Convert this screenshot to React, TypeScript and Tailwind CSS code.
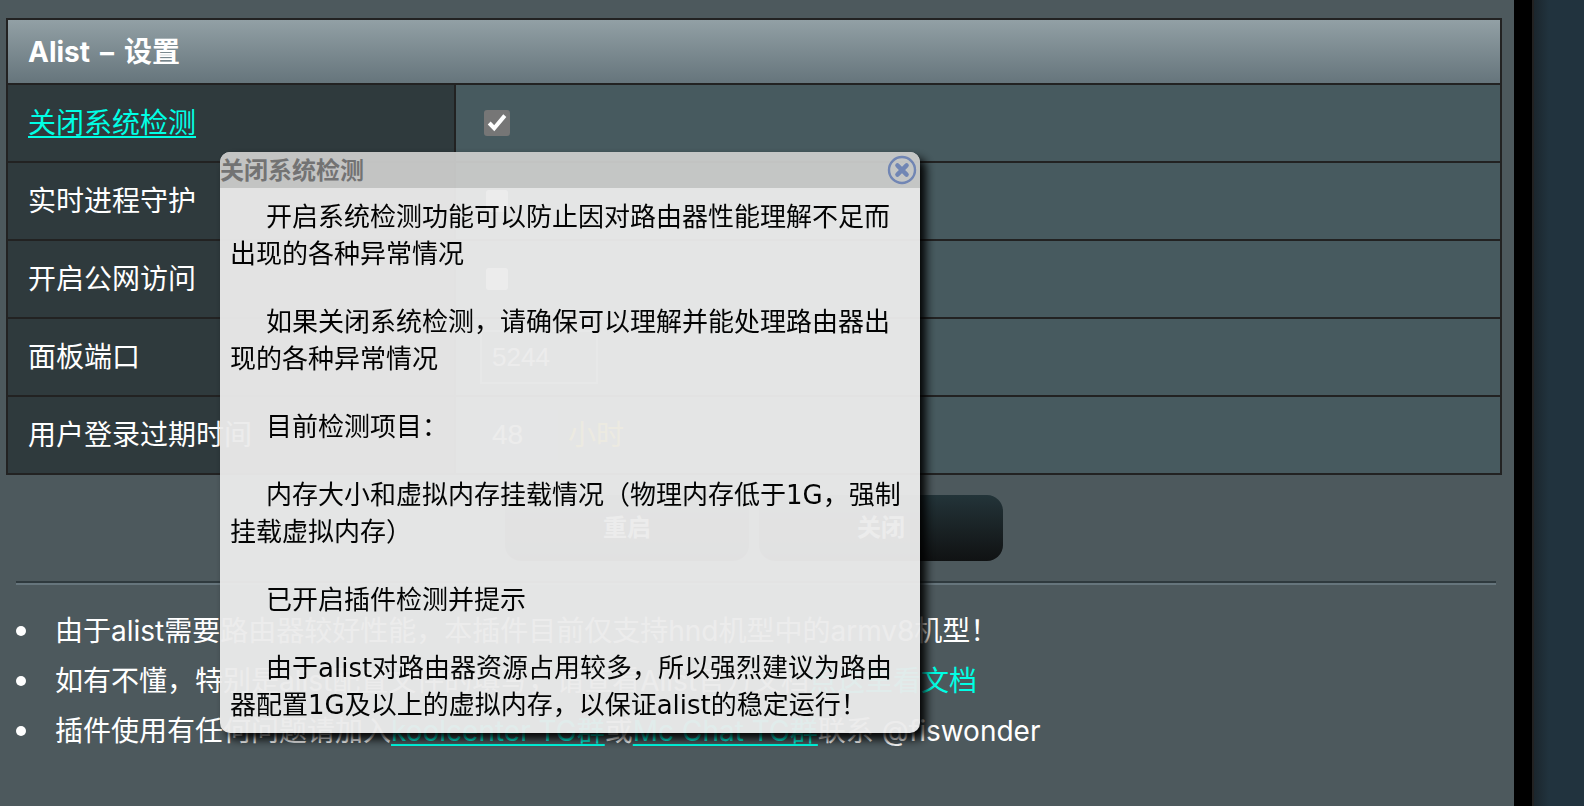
import type { ReactNode } from "react";

function CheckBox({ id, checked = false }: { id: string; checked?: boolean }) {
  return (
    <span className="grid w-[26px] place-items-center">
      <input
        id={id}
        type="checkbox"
        defaultChecked={checked}
        className="peer col-start-1 row-start-1 size-[22px] appearance-none rounded-[3px] bg-white checked:size-[26px] checked:bg-[#767676]"
      />
      <svg
        viewBox="0 0 26 26"
        className="pointer-events-none invisible col-start-1 row-start-1 size-[26px] peer-checked:visible"
        fill="none"
        stroke="#fff"
        strokeWidth="4"
      >
        <path d="M5.2 13 L10.2 18.2 L20.8 5.6" />
      </svg>
    </span>
  );
}

function Row({ label, children }: { label: ReactNode; children: ReactNode }) {
  return (
    <tr className="h-[78px]">
      <th
        scope="row"
        className="border-2 border-[#222] bg-[#2f3a3d] pl-5 text-left font-normal"
      >
        {label}
      </th>
      <td className="border-2 border-[#222] bg-[#475a5f] pl-6">{children}</td>
    </tr>
  );
}

const actionButton =
  "h-[66px] w-[244px] rounded-[16px] bg-linear-to-b from-[#233439] to-[#101213] text-[24px] font-bold";
const link = "text-[#00ffe5] underline decoration-2 underline-offset-[3px]";

function HelpDialog() {
  return (
    <section
      role="dialog"
      aria-labelledby="help-title"
      className="absolute top-[152px] left-[220px] w-[700px] overflow-hidden rounded-[10px] bg-[#ececec] font-['DejaVu_Sans','Noto_Sans_CJK_SC',sans-serif] text-black opacity-96 shadow-[6px_6px_10px_#000]"
    >
      <header className="flex h-9 items-center justify-between bg-[#cacbca] pr-[3px]">
        <h2 id="help-title" className="pt-[2px] text-[24px] leading-9 font-bold text-[#777]">
          关闭系统检测
        </h2>
        <button type="button" aria-label="关闭" className="size-[30px]">
          <svg viewBox="0 0 30 30" className="size-[30px]" fill="none" stroke="#7388b8">
            <circle cx="15" cy="15" r="13" strokeWidth="2.4" />
            <path d="M10.4 10.4 L19.6 19.6 M19.6 10.4 L10.4 19.6" strokeWidth="4.4" strokeLinecap="round" />
          </svg>
        </button>
      </header>
      <div className="flex flex-col gap-[31px] px-[10px] pt-[11px] pb-[9px] text-[26px] leading-[37px] [&>p]:indent-9">
        <p>开启系统检测功能可以防止因对路由器性能理解不足而出现的各种异常情况</p>
        <p>如果关闭系统检测，请确保可以理解并能处理路由器出现的各种异常情况</p>
        <p>目前检测项目：</p>
        <p>内存大小和虚拟内存挂载情况（物理内存低于1G，强制挂载虚拟内存）</p>
        <p>已开启插件检测并提示</p>
        <p>由于alist对路由器资源占用较多，所以强烈建议为路由器配置1G及以上的虚拟内存，以保证alist的稳定运行！</p>
      </div>
    </section>
  );
}

export default function App() {
  return (
    <div className="relative flex min-h-screen bg-[#21333e] font-[Inter,'Noto_Sans_CJK_SC',sans-serif] text-[28px] text-white">
      <main className="min-w-0 flex-1 bg-[#4d595d] pt-[18px] pr-3 pl-[6px]">
        <table className="w-full table-fixed border-collapse">
          <colgroup>
            <col className="w-[448px]" />
            <col />
          </colgroup>
          <thead>
            <tr className="h-[65px]">
              <th
                colSpan={2}
                className="border-2 border-[#222] bg-linear-to-b from-[#92a0a5] to-[#66757c] pl-5 text-left font-bold"
              >
                <span className="flex gap-[10px]">
                  <span>Alist</span>
                  <span>–</span>
                  <span>设置</span>
                </span>
              </th>
            </tr>
          </thead>
          <tbody>
            <Row label={<a href="#help-title" className={link}>关闭系统检测</a>}>
              <div className="pl-1"><CheckBox id="skip-check" checked /></div>
            </Row>
            <Row label={<label htmlFor="watchdog">实时进程守护</label>}>
              <div className="pl-1"><CheckBox id="watchdog" /></div>
            </Row>
            <Row label={<label htmlFor="public">开启公网访问</label>}>
              <div className="pl-1"><CheckBox id="public" /></div>
            </Row>
            <Row label={<label htmlFor="port">面板端口</label>}>
              <input
                id="port"
                defaultValue="5244"
                className="block h-[54px] w-[118px] border-2 border-white/40 bg-[#475a5f] px-[10px] font-['Liberation_Sans',sans-serif] text-[26px]"
              />
            </Row>
            <Row label={<label htmlFor="expire">用户登录过期时间</label>}>
              <div className="flex items-center gap-[10px]">
                <input
                  id="expire"
                  defaultValue="48"
                  className="h-[50px] w-[78px] bg-[#50666c] px-3 font-['Liberation_Sans',sans-serif]"
                />
                <span className="text-[#ffcc00]">小时</span>
              </div>
            </Row>
          </tbody>
        </table>

        <div className="flex justify-center gap-[10px] pt-5">
          <button type="button" className={actionButton}>重启</button>
          <button type="button" className={actionButton}>关闭</button>
        </div>

        <hr className="mt-5 mr-[6px] ml-[10px] h-1 border-t-2 border-b-2 border-t-[#2f3a3e] border-b-[#66757c]" />

        <ul className="mt-[21px] flex flex-col leading-[50px]">
          {[
            <>由于alist需要路由器较好性能，本插件目前仅支持hnd机型中的armv8机型！</>,
            <>
              如有不懂，特别是alist配置文件的填写，请查看Alist官方文档
              <a href="#docs" className="text-[#00ffe5]">点这里看文档</a>
            </>,
            <>
              插件使用有任何问题请加入<a href="#koolcenter" className={link}>koolcenter TG群</a>或
              <a href="#mcchat" className={link}>Mc Chat TG群</a>联系 @fiswonder
            </>,
          ].map((item, i) => (
            <li key={i} className="flex items-center gap-[29px] pl-[10px]">
              <span className="size-[10px] shrink-0 rounded-full bg-white" />
              <span>{item}</span>
            </li>
          ))}
        </ul>
      </main>

      <div className="w-[18px] shrink-0 bg-black" />
      <div className="w-[52px] shrink-0 border-l-2 border-[#222] bg-linear-to-r from-[#1b262d] to-[#21333e] to-30%" />

      <HelpDialog />
    </div>
  );
}
